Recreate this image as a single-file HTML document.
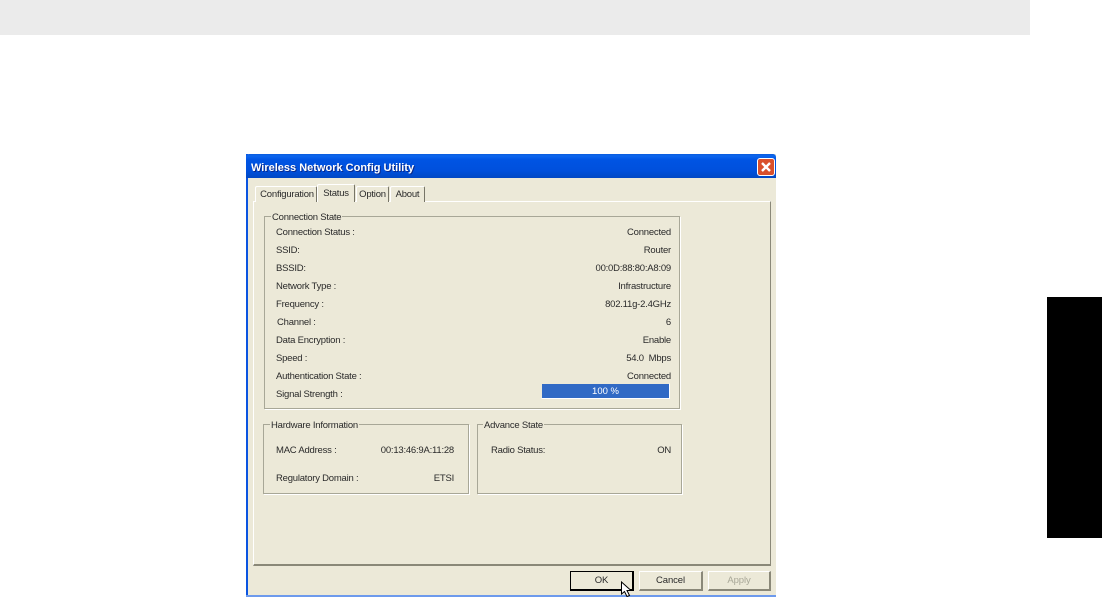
<!DOCTYPE html>
<html><head><meta charset="utf-8"><style>
html,body{margin:0;padding:0;background:#fff;width:1103px;height:597px;overflow:hidden}
body{position:relative;font-family:"Liberation Sans",sans-serif}
div{position:absolute;box-sizing:border-box}
.t{font-size:9.5px;letter-spacing:-.22px;line-height:12px;color:#2a2a2a;white-space:nowrap;height:12px;margin-top:1px}
.r{text-align:right}
.g{border:1px solid #a8a797;box-shadow:1px 1px 0 #fff}
.lg{background:#ece9d8;padding:0 1px}
.tab{background:#ece9d8;border:1px solid #fff;border-right:1px solid #777567;border-bottom:0;border-radius:2px 2px 0 0;text-align:center;font-size:9.5px;letter-spacing:-.22px;line-height:16px;color:#2a2a2a}
.btn{background:#ece9d8;border:1px solid #fff;border-right:2px solid #8a8878;border-bottom:2px solid #8a8878;text-align:center;font-size:9.5px;letter-spacing:-.1px;line-height:17px;color:#2a2a2a;height:20px}
</style></head><body>
<div style="left:0;top:0;width:1030px;height:35px;background:#ebebeb"></div>
<div style="left:1047px;top:297px;width:55px;height:241px;background:#000"></div>

<div style="left:246px;top:154px;width:530px;height:443px;background:#ece9d8;border-left:2px solid #0a54e0;border-right:0"></div>
<div style="left:246px;top:595px;width:530px;height:2px;background:#6d9aec"></div>
<div style="left:246px;top:154px;width:530px;height:24px;background:linear-gradient(#0a5bdc 0,#0d66ee 8%,#0054e3 25%,#0050dc 70%,#0148c4 100%);border-radius:3px 3px 0 0"></div>
<div style="left:251px;top:161px;font:bold 11px/14px 'Liberation Sans',sans-serif;color:#fff;text-shadow:1px 1px 0 #0a2a8a;white-space:nowrap">Wireless Network Config Utility</div>
<div style="left:757px;top:158px;width:18px;height:18px;background:#d9502c;border:1px solid #fff;border-radius:3px"></div>
<svg style="position:absolute;left:757px;top:158px" width="18" height="18"><path d="M5 5L13 13M13 5L5 13" stroke="#fff" stroke-width="2.4"/></svg>

<div style="left:253px;top:201px;width:518px;height:365px;background:#ece9d8;border:1px solid #fff;border-right:1px solid #8a8878;border-bottom:2px solid #8a8878"></div>
<div class="tab" style="left:255px;top:186px;width:62px;height:16px;padding-left:2px">Configuration</div>
<div class="tab" style="left:317px;top:184px;width:38px;height:18px;line-height:17px;z-index:2">Status</div>
<div class="tab" style="left:356px;top:186px;width:33px;height:16px">Option</div>
<div class="tab" style="left:390px;top:186px;width:35px;height:16px">About</div>

<div class="g" style="left:264px;top:216px;width:416px;height:193px"></div>
<div class="t lg" style="left:271px;top:211px">Connection State</div>
<div class="t" style="left:276px;top:226px">Connection Status :</div>
<div class="t" style="left:276px;top:244px">SSID:</div>
<div class="t" style="left:276px;top:262px">BSSID:</div>
<div class="t" style="left:276px;top:280px">Network Type :</div>
<div class="t" style="left:276px;top:298px">Frequency :</div>
<div class="t" style="left:277px;top:316px">Channel :</div>
<div class="t" style="left:276px;top:334px">Data Encryption :</div>
<div class="t" style="left:276px;top:352px">Speed :</div>
<div class="t" style="left:276px;top:370px">Authentication State :</div>
<div class="t" style="left:276px;top:388px">Signal Strength :</div>

<div class="t r" style="left:470px;width:201px;top:226px">Connected</div>
<div class="t r" style="left:470px;width:201px;top:244px">Router</div>
<div class="t r" style="left:470px;width:201px;top:262px">00:0D:88:80:A8:09</div>
<div class="t r" style="left:470px;width:201px;top:280px">Infrastructure</div>
<div class="t r" style="left:470px;width:201px;top:298px">802.11g-2.4GHz</div>
<div class="t r" style="left:470px;width:201px;top:316px">6</div>
<div class="t r" style="left:470px;width:201px;top:334px">Enable</div>
<div class="t r" style="left:470px;width:201px;top:352px">54.0&nbsp; Mbps</div>
<div class="t r" style="left:470px;width:201px;top:370px">Connected</div>
<div style="left:541px;top:383px;width:129px;height:16px;background:#316ac5;border:1px solid #fff;border-top:1px solid #ece9d8;border-left:1px solid #ece9d8;color:#fff;font-size:9.5px;line-height:16px;text-align:center">100 %</div>

<div class="g" style="left:263px;top:424px;width:206px;height:70px"></div>
<div class="t lg" style="left:270px;top:419px">Hardware Information</div>
<div class="t" style="left:276px;top:444px">MAC Address :</div>
<div class="t r" style="left:350px;width:104px;top:444px">00:13:46:9A:11:28</div>
<div class="t" style="left:276px;top:472px">Regulatory Domain :</div>
<div class="t r" style="left:350px;width:104px;top:472px">ETSI</div>

<div class="g" style="left:477px;top:424px;width:205px;height:70px"></div>
<div class="t lg" style="left:483px;top:419px">Advance State</div>
<div class="t" style="left:491px;top:444px">Radio Status:</div>
<div class="t r" style="left:600px;width:71px;top:444px">ON</div>

<div class="btn" style="left:570px;top:571px;width:64px;border:1px solid #000;border-right:2px solid #000;border-bottom:2px solid #000;line-height:17px">OK</div>
<div class="btn" style="left:639px;top:571px;width:64px">Cancel</div>
<div class="btn" style="left:708px;top:571px;width:63px;color:#a8a797">Apply</div>

<svg style="position:absolute;left:620px;top:581px" width="14" height="16"><path d="M1.5 1V13L4.5 10.5L7 15.5L9.5 14.5L7 9.5H11Z" fill="#fff" stroke="#000" stroke-width="1"/></svg>
</body></html>
